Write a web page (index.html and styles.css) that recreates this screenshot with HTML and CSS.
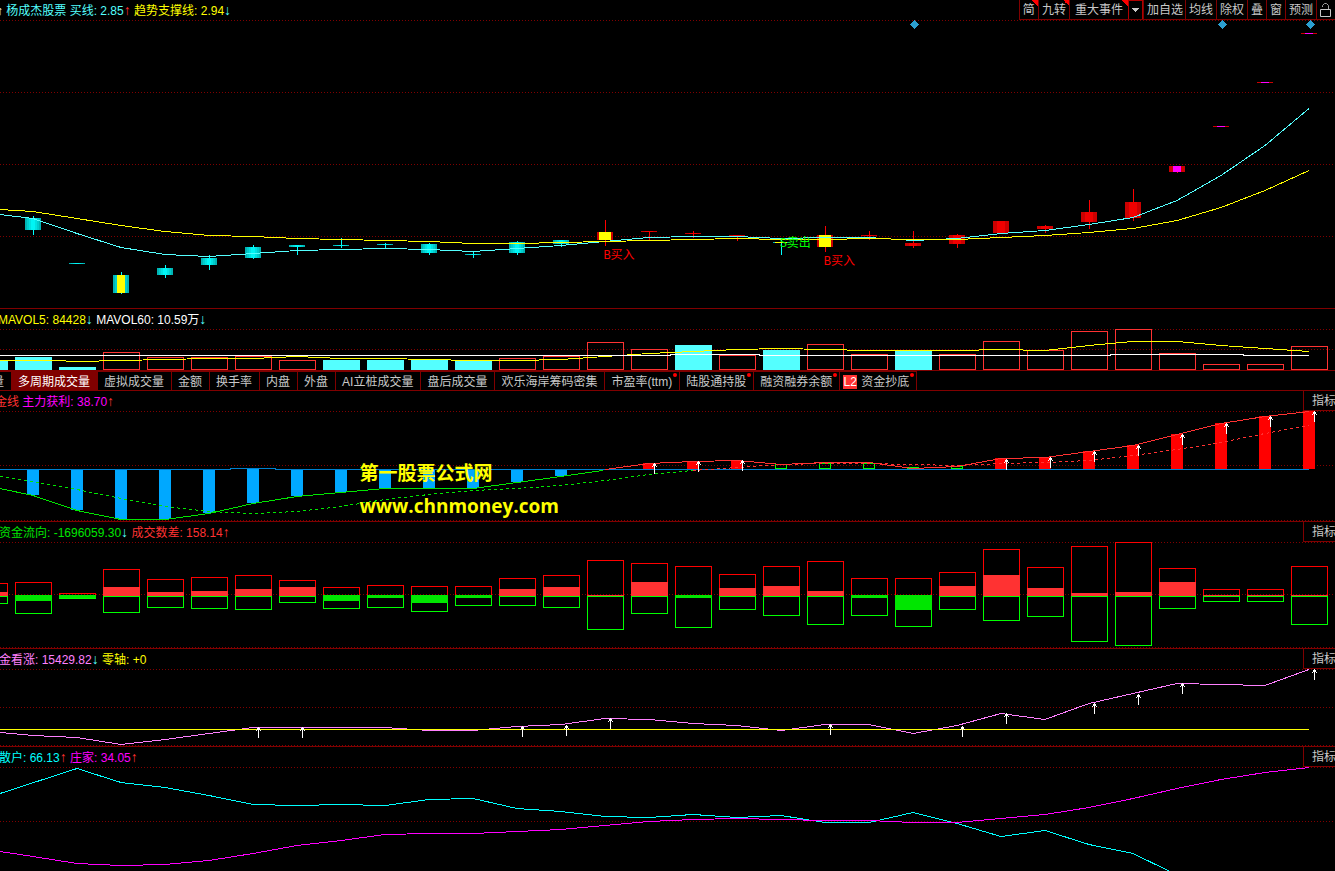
FILE: index.html
```
<!DOCTYPE html>
<html lang="zh-CN">
<head>
<meta charset="utf-8">
<title>杨成杰股票</title>
<link rel="stylesheet" href="styles.css">
</head>
<body>
<main class="terminal">

<section class="panel">
  <header class="bar">
    <p class="readout readout-main"><span class="white">↑</span> <span class="aqua">杨成杰股票 买线: 2.85</span><span class="up">↑</span> <span class="yellow">趋势支撑线: 2.94</span><span class="down">↓</span></p>
    <nav class="tools" aria-label="图表工具">
      <button type="button" class="flag">简</button>
      <button type="button" class="flag">九转</button>
      <button type="button" class="flag wide">重大事件</button>
      <button type="button" class="drop" aria-label="更多事件"><svg width="7" height="4" viewBox="0 0 7 4"><path d="M0 0h7v1H6v1H5v1H4v1H3V3H2V2H1V1H0z"/></svg></button>
      <button type="button" class="snug">加自选</button>
      <button type="button">均线</button>
      <button type="button">除权</button>
      <button type="button">叠</button>
      <button type="button">窗</button>
      <button type="button">预测</button>
      <button type="button" class="lock" aria-label="锁定"><svg width="12" height="14" viewBox="0 0 12 14"><path d="M.5 6.500h10v7H.5z"/><path class="shackle" d="M2.500 4V2.500l2-2h2l2 2V6"/></svg></button>
    </nav>
  </header>
  <div class="plot">
    <svg id="price" class="chart h-price" viewBox="0 20 1335 288" preserveAspectRatio="none"></svg>
    <span class="mark buy mark-a">B买入</span>
    <span class="mark sell mark-b">S卖出</span>
    <span class="mark buy mark-c">B买入</span>
  </div>
</section>

<section class="panel">
  <header class="bar">
    <p class="readout readout-volume"><span class="yellow">MAVOL5: 84428</span><span class="down">↓</span> <span class="white">MAVOL60: 10.59万</span><span class="down">↓</span></p>
  </header>
  <svg id="volume" class="chart h-volume" viewBox="0 329 1335 41" preserveAspectRatio="none"></svg>
</section>

<nav class="tabs" aria-label="指标选择">
  <button type="button" class="tab cut">成交量</button>
  <button type="button" class="tab active">多周期成交量</button>
  <button type="button" class="tab">虚拟成交量</button>
  <button type="button" class="tab">金额</button>
  <button type="button" class="tab">换手率</button>
  <button type="button" class="tab">内盘</button>
  <button type="button" class="tab">外盘</button>
  <button type="button" class="tab">AI立桩成交量</button>
  <button type="button" class="tab">盘后成交量</button>
  <button type="button" class="tab">欢乐海岸筹码密集</button>
  <button type="button" class="tab dot">市盈率(ttm)</button>
  <button type="button" class="tab dot">陆股通持股</button>
  <button type="button" class="tab dot">融资融券余额</button>
  <button type="button" class="tab dot level"><span class="badge">L2</span>资金抄底</button>
</nav>

<section class="panel">
  <header class="bar">
    <p class="readout readout-profit"><span class="red">金线</span> <span class="magenta">主力获利: 38.70</span><span class="up">↑</span></p>
    <button type="button" class="corner">指标</button>
  </header>
  <div class="plot">
    <svg id="profit" class="chart h-profit" viewBox="0 411 1335 110" preserveAspectRatio="none"></svg>
    <div class="watermark"><span class="wm-name">第一股票公式网</span><span class="wm-site">www.chnmoney.com</span></div>
  </div>
</section>

<section class="panel">
  <header class="bar">
    <p class="readout"><span class="green">资金流向: -1696059.30</span><span class="down">↓</span> <span class="red">成交数差: 158.14</span><span class="up">↑</span></p>
    <button type="button" class="corner">指标</button>
  </header>
  <svg id="flow" class="chart h-flow" viewBox="0 542 1335 106" preserveAspectRatio="none"></svg>
</section>

<section class="panel">
  <header class="bar">
    <p class="readout"><span class="pink">金看涨: 15429.82</span><span class="down">↓</span> <span class="yellow">零轴: +0</span></p>
    <button type="button" class="corner">指标</button>
  </header>
  <svg id="bull" class="chart h-bull" viewBox="0 669 1335 77" preserveAspectRatio="none"></svg>
</section>

<section class="panel last">
  <header class="bar">
    <p class="readout"><span class="cyan">散户: 66.13</span><span class="up">↑</span> <span class="magenta">庄家: 34.05</span><span class="up">↑</span></p>
    <button type="button" class="corner">指标</button>
  </header>
  <svg id="holders" class="chart h-holders" viewBox="0 767 1335 104" preserveAspectRatio="none"></svg>
</section>

</main>
<script src="charts.js"></script>
</body>
</html>
```
FILE: styles.css
```
* { box-sizing: border-box; }

body {
  margin: 0;
  background: #000;
  color: #c8c8c8;
  font: 12px/19px "Liberation Sans", "Noto Sans CJK SC", sans-serif;
  overflow: hidden;
}

button {
  margin: 0;
  padding: 0;
  border: 0;
  background: none;
  color: inherit;
  font: inherit;
  white-space: nowrap;
}

.terminal { display: flex; flex-direction: column; }

/* Panels */
.panel { border-bottom: 1px solid #800000; }
.panel.last { border-bottom: 0; }
.bar { display: flex; justify-content: space-between; height: 20px; }
.plot { position: relative; }
.chart { display: block; width: 100%; overflow: hidden; shape-rendering: crispEdges; }
.h-price { height: 288px; }
.h-volume { height: 41px; }
.h-profit { height: 110px; }
.h-flow { height: 106px; }
.h-bull { height: 77px; }
.h-holders { height: 104px; }

.readout { margin: 0 0 0 -1px; line-height: 22px; white-space: nowrap; }
.readout-main { margin-left: -3px; }
.readout-volume { margin-left: -2px; }
.readout-profit { margin-left: -5px; }

.white { color: #fff; }
.aqua, .down { color: #54ffff; }
.yellow { color: #ff0; }
.red, .up { color: #ff3232; }
.magenta { color: #f0f; }
.green { color: #00e600; }
.pink { color: #ff80ff; }
.cyan { color: #0ff; }
.up, .down { font-size: 14px; font-weight: bold; line-height: 16px; }

/* Toolbar */
.tools { display: flex; border-bottom: 1px solid #800000; }
.tools button {
  display: flex;
  align-items: center;
  padding: 2px 3px 0;
  border-left: 1px solid #800000;
}
.tools .wide { padding: 2px 5px 0; }
.tools .snug { padding-right: 2px; }
.tools .flag { background: linear-gradient(45deg, transparent 50%, #f00 50%) right top / 6px 6px no-repeat; }
.tools .drop { padding: 0 3px; border: 1px solid #b00000; border-bottom: 0; }
.drop svg { fill: #c8c8c8; }
.tools .lock { padding: 0 3px; }
.lock svg { flex: none; fill: none; stroke: #c8c8c8; }
.lock .shackle { stroke: #a0a0a0; }

.corner {
  width: 32px;
  padding: 2px 0 0 8px;
  overflow: hidden;
  border-left: 1px solid #800000;
  border-bottom: 1px solid #800000;
  line-height: 17px;
  text-align: left;
}

/* Indicator tabs */
.tabs { display: flex; height: 20px; border-bottom: 1px solid #800000; }
.tab {
  position: relative;
  padding: 2px 7px 0 6px;
  border-top: 1px solid #800000;
  border-right: 1px solid #800000;
  line-height: 16px;
}
.tab.cut { display: flex; justify-content: flex-end; width: 12px; padding-left: 0; overflow: hidden; }
.tab.active { background: #800000; color: #fff; }
.tab.dot::after {
  content: "";
  position: absolute;
  top: 1px;
  right: 2px;
  width: 4px;
  height: 4px;
  border-radius: 2px;
  background: #f00;
}
.tab.level { display: flex; align-items: center; gap: 4px; padding-left: 3px; }
.badge { width: 14px; background: #ff3232; color: #fff; line-height: 14px; text-align: center; }

/* Notes lying over the plots */
.mark { position: absolute; font: 12px/14px "Liberation Mono", "Noto Sans CJK SC", monospace; white-space: nowrap; }
.buy { color: #f00; }
.sell { color: #0f0; }
.mark-a { left: 45.2%; top: 229px; }
.mark-b { left: 58.4%; top: 217px; }
.mark-c { left: 61.7%; top: 235px; }

.watermark {
  position: absolute;
  left: 27%;
  top: 47px;
  display: flex;
  flex-direction: column;
  gap: 6px;
  margin-left: -1px;
  color: #ff0;
  font: bold 19px/28px "Open Sans", "Noto Sans CJK SC", sans-serif;
}
.wm-name { font-family: "Noto Sans CJK SC", sans-serif; }
```
FILE: charts.js
```
const NS = "http://www.w3.org/2000/svg";
const FIRST = 33, STEP = 44, LAST = 1309;
const at = k => FIRST + STEP * k;
const svg = id => document.getElementById(id);

function add(el, tag, attrs) {
  const n = document.createElementNS(NS, tag);
  for (const a in attrs) n.setAttribute(a, attrs[a]);
  el.appendChild(n);
}
function rect(el, x, y, w, h, fill) {
  if (h > 0) add(el, "rect", { x, y, width: w, height: h, fill });
}
function box(el, x, y, w, bottom, stroke) {
  add(el, "rect", { x: x + 0.5, y: y + 0.5, width: w - 1, height: bottom - y - 1, fill: "none", stroke });
}
function path(el, pts, stroke, dash) {
  const a = { points: pts.map(p => p[0] + "," + (p[1] + 0.5)).join(" "), fill: "none", stroke };
  if (dash) a["stroke-dasharray"] = dash;
  add(el, "polyline", a);
}
const series = (ys, from = 0) => ys.map((y, i) => [at(from + i), y]);
function grid(el, ys) {
  ys.forEach(y => add(el, "line", { x1: 0, x2: 1335, y1: y + 0.5, y2: y + 0.5, stroke: "#800000", "stroke-dasharray": "1 2" }));
}
function arrow(el, x, y) {
  rect(el, x, y, 1, 11, "#fff");
  rect(el, x - 1, y + 1, 3, 2, "#fff");
  rect(el, x - 2, y + 3, 1, 1, "#fff");
  rect(el, x + 2, y + 3, 1, 1, "#fff");
}

/* Price: [body top, body bottom, wick top, wick bottom, colour, core colour, core half width] */
const price = svg("price");
grid(price, [20, 92, 164, 236]);
const candles = [
  [218, 230, 216, 235, "c"], [263, 264, 263, 264, "c"], [275, 293, 272, 294, "c", "#ff0", 4],
  [268, 275, 265, 278, "c"], [258, 265, 255, 270, "c"], [247, 258, 245, 259, "c"],
  [245, 247, 245, 255, "c"], [245, 246, 238, 248, "c"], [244, 245, 243, 248, "c"],
  [244, 253, 243, 255, "c"], [254, 255, 251, 258, "c"], [242, 253, 241, 255, "c"],
  [240, 244, 240, 247, "c"], [232, 240, 220, 246, "r", "#ff0", 6], [231, 232, 231, 240, "r"],
  [233, 234, 231, 238, "r"], [235, 236, 235, 241, "r"], [242, 243, 240, 255, "c", "#ff0", 6],
  [235, 247, 226, 252, "r", "#ff0", 6], [235, 236, 231, 240, "r"], [243, 246, 231, 248, "r"],
  [235, 244, 234, 248, "r"], [221, 233, 221, 233, "r"], [226, 229, 225, 233, "r"],
  [212, 222, 200, 229, "r"], [202, 218, 189, 221, "r"], [166, 172, 166, 173, "r", "#f0f", 4],
  [126, 127, 126, 127, "r", "#f0f", 4], [82, 83, 82, 83, "r", "#f0f", 4], [33, 34, 33, 34, "r", "#f0f", 4]
];
const shades = {
  c: ["#00b4b4", "#00cdcd", "#00e1e1", "#00f5f5"],
  r: ["#cc0000", "#cc0000", "#f00000", "#f00000"]
};
candles.forEach(([t, b, wt, wb, tone, core, half], k) => {
  const x = at(k);
  rect(price, x, wt, 1, wb - wt, tone === "c" ? "#0ff" : "#f00");
  shades[tone].forEach((s, i) => rect(price, x - 8 + i * 2, t, 16 - i * 4, b - t, s));
  if (core) rect(price, x - half, t, half * 2, b - t, core);
});
path(price, [[0, 214], ...series([218, 233, 247, 254, 256, 253, 250, 249, 248, 249, 251, 248, 245, 241, 237, 236, 236, 238, 237, 237, 240, 238, 233, 230, 224, 217, 200, 175, 145, 108])], "#54ffff");
path(price, [[0, 209], ...series([211, 218, 225, 231, 235, 236, 238, 239, 240, 241, 243, 243, 242, 241, 240, 239, 238, 239, 239, 238, 239, 239, 237, 235, 232, 228, 220, 207, 190, 170])], "#ff0");
[914, 1222, 1310].forEach(x => add(price, "path", { d: `M${x + 0.5} 20l4.500 4.500l-4.500 4.500l-4.500 -4.500z`, fill: "#2b9fd0" }));

/* Volume: positive = rising outline top, negative = falling solid top */
const volume = svg("volume");
grid(volume, [329, 349]);
[-361, -357, -367, 352, 357, 357, 356, 360, -360, -360, -359, -360, 358, 356, 342, 349, -345, 355, -350, 344, 354, -351, 354, 341, 350, 331, 329, 353, 364, 364, 346]
  .forEach((v, i) => {
    const x = at(i - 1) - 18;
    if (v < 0) rect(volume, x, -v, 37, 370 + v, "#54ffff");
    else box(volume, x, v, 37, 370, "#ff3232");
  });
path(volume, [[0, 360], [55, 360], [77, 361], ...series([360, 359, 358, 358, 356, 358, 358, 359, 360, 360, 359, 356, 353, 351, 349, 348, 349, 350, 350, 350, 349, 350, 345, 341, 341, 345, 348, 351], 2)], "#ff0");
path(volume, [[0, 355], [670, 355], [671, 354], [759, 354], [760, 355], [1110, 355], [1111, 354], [1243, 354], [1244, 355], [LAST, 355]], "#fff");

/* Profit */
const profit = svg("profit");
grid(profit, [411, 465, 520]);
[495, 510, 519, 519, 513, 503, 496, 492, 488, 488, 488, 482, 476].forEach((b, k) => rect(profit, at(k) - 6, 469, 12, b - 469, "#00a8ff"));
[[14, 463], [15, 461], [16, 460], [22, 458], [23, 457], [24, 451], [25, 445], [26, 434], [27, 423], [28, 416], [29, 411]]
  .forEach(([k, t]) => rect(profit, at(k) - 6, t, 12, 469 - t, "#f00"));
[[17, 464], [18, 463], [19, 463], [21, 466]].forEach(([k, t]) => box(profit, at(k) - 6, t, 12, 469, "#0f0"));
rect(profit, 907, 467, 12, 2, "#0f0");
path(profit, [[0, 469], [230, 469], [231, 468], [275, 468], [276, 469], [LAST, 469]], "#0080d0");
path(profit, [[0, 488], ...series([495, 510, 519, 519, 513, 503, 496, 492, 488, 488, 488, 482, 476]), [603, 470]], "#00e600");
path(profit, series([469, 463, 461, 460, 464, 462, 462, 468, 466, 458, 457, 451, 445, 434, 423, 416, 411], 13), "#ff3232");
path(profit, [[0, 476], ...series([481, 489, 498, 506, 511, 513, 511, 506, 499, 494, 490, 488, 485, 480, 474, 470])], "#00e600", "3 3");
path(profit, series([470, 467, 464, 463, 463, 464, 465, 463, 462, 460, 455, 449, 442, 433, 425], 15), "#ff3232", "3 3");
[[14, 463], [15, 461], [16, 460], [22, 459], [23, 457], [24, 451], [25, 445], [26, 434], [27, 423], [28, 416], [29, 411]]
  .forEach(([k, t]) => arrow(profit, at(k) + 5, t));

/* Flow: [outline top, solid edge, outline bottom]; a solid edge below the axis is an outflow */
const flow = svg("flow");
grid(flow, [542, 594, 647]);
[[583, 592, 603], [582, 601, 613], [593, 598, 598], [569, 587, 612], [579, 592, 607], [577, 591, 608], [575, 589, 609], [580, 587, 602],
 [587, 601, 608], [585, 598, 607], [586, 603, 611], [586, 598, 605], [578, 589, 605], [575, 587, 607], [560, 595, 629], [563, 582, 613],
 [566, 598, 627], [574, 588, 609], [566, 586, 615], [561, 591, 624], [578, 598, 615], [578, 610, 626], [572, 586, 609], [549, 575, 620],
 [567, 588, 616], [546, 593, 641], [542, 592, 645], [568, 582, 608], [589, 595, 601], [589, 595, 601], [566, 595, 624]]
  .forEach(([t, s, b], i) => {
    const x = at(i - 1) - 18;
    box(flow, x, t, 37, 596, "#f00");
    box(flow, x, 596, 37, b + 1, "#0f0");
    if (s < 596) rect(flow, x, s, 37, 596 - s, "#ff3232");
    else rect(flow, x, 595, 37, s - 595, "#00e600");
  });

/* Bull signal */
const bull = svg("bull");
grid(bull, [669, 707, 745]);
path(bull, [[0, 732], ...series([735, 737, 744, 739, 733, 727, 727, 727, 727, 730, 730, 726, 724, 718, 719, 723, 725, 730, 724, 724, 733, 725, 713, 719, 703, 693, 683, 684, 685, 669])], "#ff80ff");
path(bull, [[0, 729], [LAST, 729]], "#ff0");
[[5, 727], [6, 727], [11, 726], [12, 725], [13, 718], [18, 724], [21, 726], [22, 713], [24, 703], [25, 694], [26, 683], [29, 669]]
  .forEach(([k, t]) => arrow(bull, at(k) + 5, t));

/* Holders */
const holders = svg("holders");
grid(holders, [767, 821]);
path(holders, [[0, 793], [77, 768], ...series([782, 787, 795, 804, 805, 804, 805, 799, 798, 808, 811, 816, 817, 814, 817, 815, 822, 822, 812, 823, 836, 830, 844, 853], 2), [1170, 871]], "#0ff");
path(holders, [[0, 851], ...series([856, 863, 865, 864, 860, 853, 845, 840, 834, 833, 833, 831, 829, 825, 821, 819, 818, 819, 820, 820, 822, 822, 818, 814, 807, 798, 788, 779, 772, 767])], "#f0f");
```
